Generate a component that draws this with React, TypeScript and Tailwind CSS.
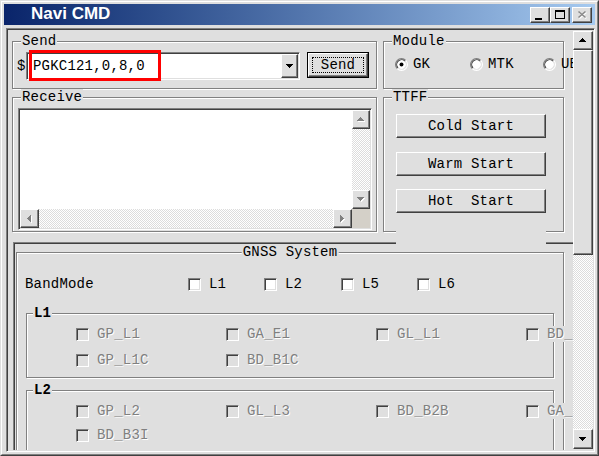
import type { ReactNode } from "react";

const raised =
  "border border-t-white border-l-white border-r-[#404040] border-b-[#404040] shadow-[inset_-1px_-1px_0_#808080]";
const sunken =
  "border border-t-[#808080] border-l-[#808080] border-r-white border-b-white p-[1px] shadow-[inset_1px_1px_0_#404040,inset_-1px_-1px_0_#dfdfdf]";
const etched = "border border-[#808080] shadow-[inset_1px_1px_0_#fff,1px_1px_0_#fff]";
const dither =
  "bg-[image:repeating-conic-gradient(#ffffff_0%_25%,#dcdcdc_0%_50%)] bg-[length:2px_2px]";
const disabledText = "text-[#808080] [text-shadow:1px_1px_0_#fff]";

const ARROWS = {
  up: { w: 7, h: 4, d: "M3 0h1v1h1v1h1v1h1v1H0v-1h1v-1h1v-1h1z" },
  down: { w: 7, h: 4, d: "M0 0h7v1h-1v1h-1v1h-1v1h-1v-1h-1v-1h-1v-1h-1z" },
  left: { w: 4, h: 7, d: "M3 0h1v7h-1v-1h-1v-1h-1v-1h-1v-1h1v-1h1v-1h1z" },
  right: { w: 4, h: 7, d: "M0 0h1v1h1v1h1v1h1v1h-1v1h-1v1h-1v1h-1z" },
};

function Arrow({ dir, disabled }: { dir: keyof typeof ARROWS; disabled?: boolean }) {
  const a = ARROWS[dir];
  return (
    <svg width={a.w + 1} height={a.h + 1} viewBox={`0 0 ${a.w + 1} ${a.h + 1}`} shapeRendering="crispEdges">
      {disabled && <path d={a.d} fill="#fff" transform="translate(1 1)" />}
      <path d={a.d} fill={disabled ? "#808080" : "#000"} />
    </svg>
  );
}

function Group({
  title,
  className,
  legend = "left-[8px]",
  children,
}: {
  title: string;
  className: string;
  legend?: string;
  children?: ReactNode;
}) {
  return (
    <div className={`relative shrink-0 ${etched} ${className}`}>
      <span className={`absolute -top-[9px] bg-[#dfdfdf] px-[1px] whitespace-nowrap ${legend}`}>{title}</span>
      {children}
    </div>
  );
}

function Check({ label, disabled }: { label: string; disabled?: boolean }) {
  return (
    <div className="flex items-center gap-[8px]">
      <span className={`h-[13px] w-[13px] shrink-0 ${sunken} ${disabled ? "bg-[#dfdfdf]" : "bg-white"}`} />
      <span className={`whitespace-nowrap bg-[#dfdfdf] ${disabled ? disabledText : ""}`}>{label}</span>
    </div>
  );
}

function Radio({ label, checked }: { label: string; checked?: boolean }) {
  return (
    <div className="flex items-center gap-[5px]">
      <svg width="13" height="13" viewBox="0 0 12 12" className="shrink-0">
        <circle cx="6" cy="6" r="5" fill="#fff" />
        <path d="M2.11 9.89A5.5 5.5 0 0 1 9.89 2.11" stroke="#808080" fill="none" />
        <path d="M9.89 2.11A5.5 5.5 0 0 1 2.11 9.89" stroke="#fff" fill="none" />
        <path d="M2.82 9.18A4.5 4.5 0 0 1 9.18 2.82" stroke="#404040" fill="none" />
        <path d="M9.18 2.82A4.5 4.5 0 0 1 2.82 9.18" stroke="#dfdfdf" fill="none" />
        {checked && <circle cx="6" cy="6" r="1.8" fill="#000" />}
      </svg>
      <span className="whitespace-nowrap">{label}</span>
    </div>
  );
}

function TitleBar() {
  return (
    <div className="flex h-[21px] shrink-0 items-center bg-linear-to-r from-[#0a246a] to-[#a6caf0] pl-[27px] pr-[3px]">
      <span className="-mt-[2px] font-['Liberation_Sans',Arial,sans-serif] text-[17px] leading-none font-bold tracking-normal text-white">
        Navi CMD
      </span>
      <div className="ml-auto flex items-center">
        <div className={`flex h-[16px] w-[20px] items-end justify-start bg-[#dfdfdf] pb-[2px] pl-[4px] ${raised}`}>
          <span className="h-[2px] w-[7px] bg-black" />
        </div>
        <div className={`flex h-[16px] w-[20px] items-center justify-center bg-[#dfdfdf] ${raised}`}>
          <svg width="10" height="9" viewBox="0 0 10 9" shapeRendering="crispEdges">
            <path d="M0.5 0.5h9v8h-9z" stroke="#000" fill="none" />
            <rect x="0" y="1" width="10" height="1" fill="#000" />
          </svg>
        </div>
        <div className={`ml-[2px] flex h-[16px] w-[20px] items-center justify-center bg-[#dfdfdf] ${raised}`}>
          <svg width="10" height="9" viewBox="0 0 10 9">
            <path d="M1.5 1.5l7 6M8.5 1.5l-7 6" stroke="#fff" strokeWidth="1.6" transform="translate(0.8 0.8)" />
            <path d="M1.5 1.5l7 6M8.5 1.5l-7 6" stroke="#8a8a8a" strokeWidth="1.6" />
          </svg>
        </div>
      </div>
    </div>
  );
}

export default function App() {
  return (
    <div className="h-[456px] w-[599px] overflow-hidden border border-t-[#dfdfdf] border-l-[#dfdfdf] border-r-[#404040] border-b-[#404040] bg-[#dfdfdf] font-['Liberation_Mono','Courier_New',monospace] text-[14px] leading-[16px] tracking-[0.2px] text-black">
      <div className="flex h-full flex-col border border-t-white border-l-white border-r-[#808080] border-b-[#808080] p-[2px]">
        <TitleBar />

        {/* client area */}
        <div className={`mt-[3px] ml-[2px] flex h-[424px] ${sunken}`}>
          <div className="relative h-full w-[565px] overflow-hidden pt-[11px] pl-[4px]">
            {/* row 1 */}
            <div className="flex gap-[6px]">
              <Group title="Send" className="h-[48px] w-[365px]">
                <div className="mt-[10px] flex items-start">
                  <span className="h-[28px] w-[13px] pl-[4px] leading-[28px]">$</span>
                  <div className={`flex h-[28px] w-[274px] bg-white ${sunken}`}>
                    <span className="flex flex-1 items-center pl-[5px]">PGKC121,0,8,0</span>
                    <div className={`flex w-[17px] items-center justify-center bg-[#dfdfdf] ${raised}`}>
                      <Arrow dir="down" />
                    </div>
                  </div>
                  <div className="ml-[7px] h-[26px] w-[62px] border border-black">
                    <div className={`h-full w-full p-[3px] ${raised}`}>
                      <div className="flex h-full items-center justify-center border border-dotted border-black">
                        Send
                      </div>
                    </div>
                  </div>
                </div>
                <div className="absolute top-[8px] left-[16px] h-[31px] w-[132px] border-[3px] border-[#ff0000]" />
              </Group>

              <Group title="Module" className="h-[48px] w-[181px]">
                <div className="mt-[14px] flex items-center pl-[11px]">
                  <div className="w-[75px] shrink-0">
                    <Radio label="GK" checked />
                  </div>
                  <div className="w-[73px] shrink-0">
                    <Radio label="MTK" />
                  </div>
                  <div className="shrink-0">
                    <Radio label="UBX" />
                  </div>
                </div>
              </Group>
            </div>

            {/* row 2 */}
            <div className="mt-[8px] flex gap-[6px]">
              <Group title="Receive" className="h-[135px] w-[365px]">
                <div className={`mt-[10px] ml-[5px] flex h-[122px] w-[354px] flex-col ${sunken}`}>
                  <div className="flex min-h-0 flex-1">
                    <div className="flex-1 bg-white" />
                    <div className="flex w-[18px] flex-col">
                      <div className={`flex h-[19px] items-center justify-center bg-[#dfdfdf] ${raised}`}>
                        <Arrow dir="up" disabled />
                      </div>
                      <div className={`flex-1 ${dither}`} />
                      <div className={`flex h-[19px] items-center justify-center bg-[#dfdfdf] ${raised}`}>
                        <Arrow dir="down" disabled />
                      </div>
                    </div>
                  </div>
                  <div className="flex h-[19px]">
                    <div className={`flex w-[19px] items-center justify-center bg-[#dfdfdf] ${raised}`}>
                      <Arrow dir="left" disabled />
                    </div>
                    <div className={`flex-1 ${dither}`} />
                    <div className={`flex w-[19px] items-center justify-center bg-[#dfdfdf] ${raised}`}>
                      <Arrow dir="right" disabled />
                    </div>
                    <div className="w-[18px] bg-[#d4d0c8]" />
                  </div>
                </div>
              </Group>

              <Group title="TTFF" className="h-[135px] w-[181px]">
                <div className="flex flex-col pl-[12px]">
                  <button type="button" className={`mt-[16px] h-[24px] w-[150px] whitespace-pre ${raised}`}>
                    Cold Start
                  </button>
                  <button type="button" className={`mt-[14px] h-[24px] w-[150px] whitespace-pre ${raised}`}>
                    Warm Start
                  </button>
                  <button type="button" className={`mt-[13px] h-[24px] w-[150px] whitespace-pre ${raised}`}>
                    Hot  Start
                  </button>
                </div>
              </Group>
            </div>

            {/* GNSS panel */}
            <div className="mt-[10px] ml-[1px] h-[260px] w-[575px] border-t border-l border-[#808080] pt-[1px] pl-[1px] shadow-[inset_1px_1px_0_#404040]">
              <Group
                title="GNSS System"
                legend="left-1/2 -translate-x-1/2"
                className="mt-[8px] ml-[1px] h-[250px] w-[548px]"
              >
                <div className="mt-[23px] flex h-[16px] items-center pl-[8px]">
                  <span className="w-[163px] shrink-0">BandMode</span>
                  <div className="w-[76px] shrink-0">
                    <Check label="L1" />
                  </div>
                  <div className="w-[77px] shrink-0">
                    <Check label="L2" />
                  </div>
                  <div className="w-[76px] shrink-0">
                    <Check label="L5" />
                  </div>
                  <Check label="L6" />
                </div>

                <Group title="L1" legend="left-[6px] font-bold" className="mt-[21px] ml-[9px] h-[65px] w-[528px]">
                  <div className="grid auto-rows-[26px] grid-cols-[150px_150px_150px_150px] items-center pt-[7px] pl-[49px]">
                    <Check label="GP_L1" disabled />
                    <Check label="GA_E1" disabled />
                    <Check label="GL_L1" disabled />
                    <Check label="BD_B1I" disabled />
                    <Check label="GP_L1C" disabled />
                    <Check label="BD_B1C" disabled />
                  </div>
                </Group>

                <Group title="L2" legend="left-[6px] font-bold" className="mt-[12px] ml-[9px] h-[80px] w-[528px]">
                  <div className="grid auto-rows-[24px] grid-cols-[150px_150px_150px_150px] items-center pt-[8px] pl-[49px]">
                    <Check label="GP_L2" disabled />
                    <Check label="GL_L3" disabled />
                    <Check label="BD_B2B" disabled />
                    <Check label="GA_E5b" disabled />
                    <Check label="BD_B3I" disabled />
                  </div>
                </Group>
              </Group>
            </div>

            {/* hidden control area covering frame lines */}
            <div className="absolute top-[190px] left-[388px] h-[29px] w-[150px] bg-[#dfdfdf]" />
          </div>

          {/* vertical scrollbar */}
          <div className="flex w-[20px] flex-col py-[1px]">
            <div className={`flex h-[19px] items-center justify-center bg-[#dfdfdf] ${raised}`}>
              <Arrow dir="up" />
            </div>
            <div className={`h-[205px] bg-[#dfdfdf] ${raised}`} />
            <div className={`flex-1 ${dither}`} />
            <div className={`flex h-[20px] items-center justify-center bg-[#dfdfdf] ${raised}`}>
              <Arrow dir="down" />
            </div>
          </div>
        </div>
      </div>
    </div>
  );
}
